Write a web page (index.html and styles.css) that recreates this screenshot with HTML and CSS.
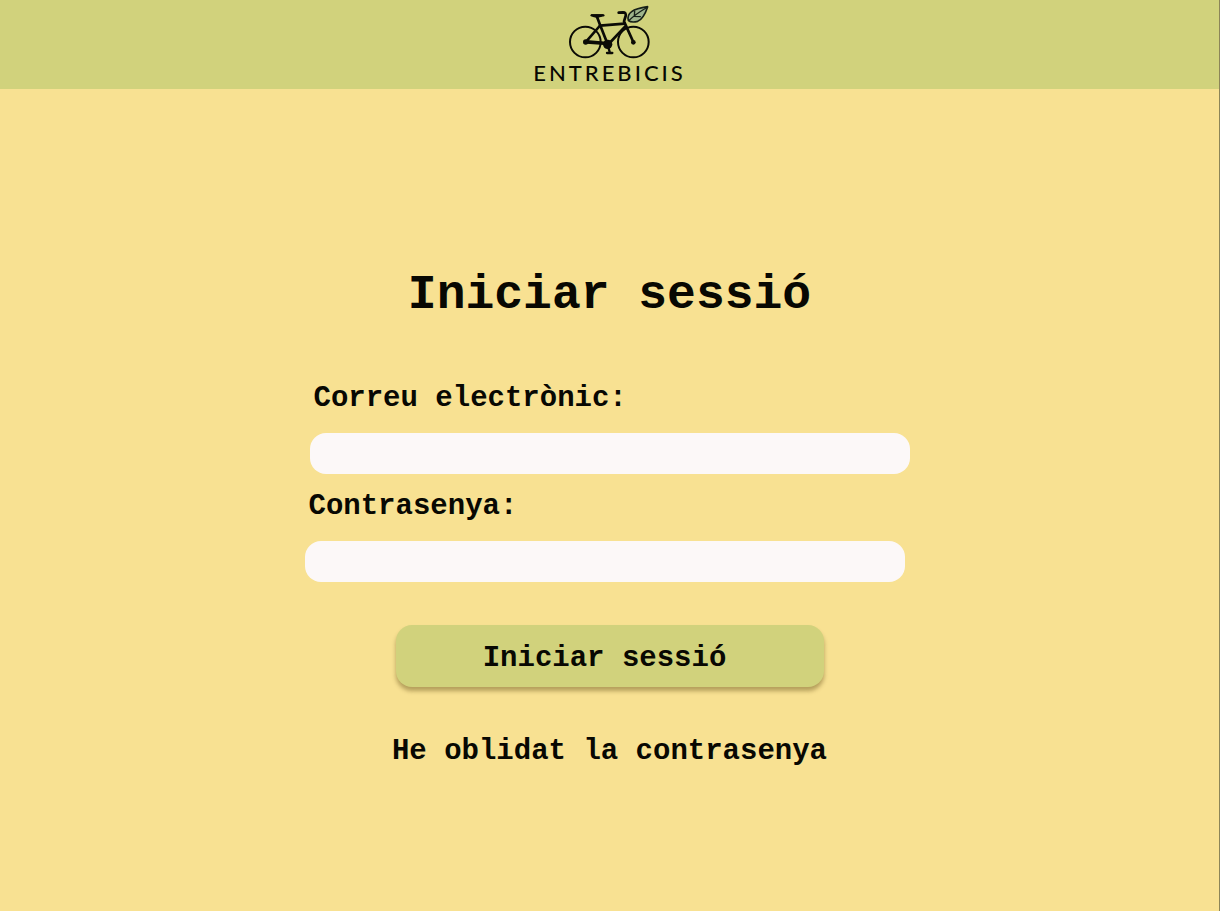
FILE: index.html
```html
<!DOCTYPE html>
<html lang="ca">
<head>
<meta charset="utf-8">
<meta name="viewport" content="width=device-width, initial-scale=1">
<title>Entrebicis</title>
<link rel="stylesheet" href="styles.css">
</head>
<body class="page">
<header class="topbar">
  <svg class="bike" viewBox="132 14 252 162" aria-hidden="true">
    <g fill="none" stroke="#0b0b06" stroke-linecap="round" stroke-linejoin="round">
      <g stroke-width="6">
        <circle cx="184" cy="125" r="46"/>
        <circle cx="328" cy="125" r="46"/>
      </g>
      <g stroke-width="8">
        <path d="M218 47L228 73L251 132"/>
        <path d="M228 76L302 70"/>
        <path d="M303 79L254 131"/>
        <path d="M227 77L187 123L248 128"/>
        <path d="M187 127L240 131" stroke-width="6"/>
        <path d="M328 125L300 63L305 47Q307 36 297 36L284 37"/>
      </g>
      <path d="M252 138L258 158M249 158H265" stroke-width="7"/>
      <path d="M203 45H238" stroke-width="7"/>
    </g>
    <g fill="#0b0b06">
      <path d="M201 42H238Q240 47 233 49L220 53L207 50Q201 47 201 42Z"/>
      <circle cx="251" cy="132" r="14"/>
      <circle cx="185" cy="125" r="8"/>
      <circle cx="328" cy="126" r="7"/>
    </g>
    <path d="M371 19Q336 24 323 34Q309 44 313 60Q321 68 341 63Q359 55 371 19Z" fill="#9fb58c" stroke="#172018" stroke-width="5" stroke-linejoin="round"/>
    <path d="M314 61Q334 42 366 23M331 47L332 33M331 48L349 49" fill="none" stroke="#172018" stroke-width="4" stroke-linecap="round"/>
  </svg>
  <span class="wordmark">ENTREBICIS</span>
</header>
<main class="content">
  <h1 class="title">Iniciar sessió</h1>
  <form class="login">
    <div class="field field-email">
      <label class="label" for="email">Correu electrònic:</label>
      <input class="input" id="email" name="email" type="email">
    </div>
    <div class="field">
      <label class="label" for="password">Contrasenya:</label>
      <input class="input" id="password" name="password" type="password">
    </div>
    <button class="submit" type="submit">Iniciar sessió</button>
  </form>
  <a class="forgot" href="#">He oblidat la contrasenya</a>
</main>
</body>
</html>
```
FILE: styles.css
```css
* {
  box-sizing: border-box;
}

.page {
  margin: 0;
  min-height: 100vh;
  background: #f8e192;
  border-right: 1px solid #8c8558;
  color: #080802;
  font-family: "Liberation Mono", monospace;
  font-weight: 700;
}

.topbar {
  display: flex;
  flex-direction: column;
  align-items: center;
  padding: 5px 0 3px;
  background: #d1d27c;
}

.bike {
  display: block;
  width: 84px;
  height: 54px;
}

.wordmark {
  padding-top: 1px;
  font-family: Lato, sans-serif;
  font-size: 22px;
  font-weight: 500;
  line-height: 26px;
  letter-spacing: 3px;
}

.content {
  display: flex;
  flex-direction: column;
  align-items: center;
  padding: 176px 16px 48px;
}

.title {
  margin: 0 0 56px;
  font-size: 48px;
  line-height: 60px;
  text-align: center;
}

.login {
  display: flex;
  flex-direction: column;
  gap: 15px;
  width: 100%;
  max-width: 610px;
}

.field {
  display: flex;
  flex-direction: column;
  gap: 16px;
  margin-right: 10px;
}

.field-email {
  margin-right: 5px;
  margin-left: 5px;
}

.label {
  padding-left: 4px;
  font-size: 29px;
  line-height: 36px;
}

.input {
  width: 100%;
  height: 41px;
  padding: 0 16px;
  border: 0;
  border-radius: 16px;
  background: #fcf8f8;
  color: inherit;
  font: inherit;
  font-size: 20px;
}

.submit {
  align-self: center;
  width: 100%;
  max-width: 428px;
  height: 62px;
  margin-top: 28px;
  padding: 4px 10px 0 0;
  border: 0;
  border-radius: 16px;
  background: #d1d27c;
  box-shadow: 0 4px 4px rgba(80, 60, 10, 0.4);
  color: inherit;
  font: inherit;
  font-size: 29px;
  cursor: pointer;
}

.forgot {
  margin-top: 47px;
  color: inherit;
  font-size: 29px;
  line-height: 36px;
  text-align: center;
  text-decoration: none;
}
```
